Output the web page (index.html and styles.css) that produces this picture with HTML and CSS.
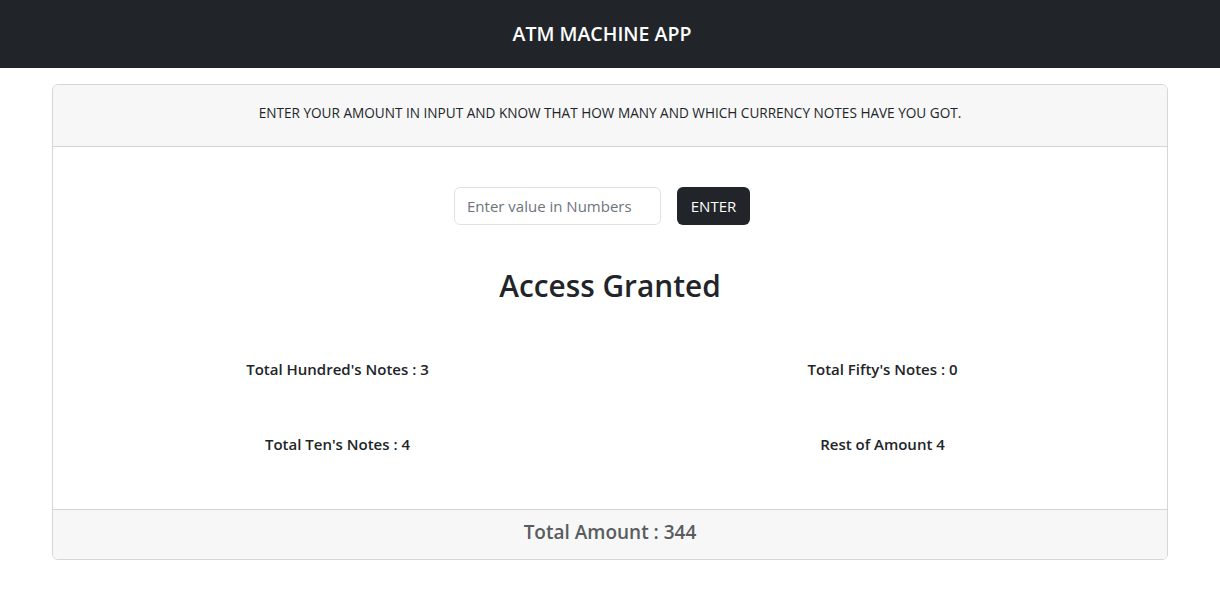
FILE: index.html
```html
<!DOCTYPE html>
<html lang="en">
<head>
<meta charset="utf-8">
<title>ATM Machine App</title>
<link rel="stylesheet" href="styles.css">
</head>
<body>
<nav class="navbar">
  <span class="brand">ATM MACHINE APP</span>
</nav>
<main class="container">
  <section class="card">
    <header class="card-header">
      <p>ENTER YOUR AMOUNT IN INPUT AND KNOW THAT HOW MANY AND WHICH CURRENCY NOTES HAVE YOU GOT.</p>
    </header>
    <div class="card-body">
      <form class="entry">
        <input class="field" type="text" placeholder="Enter value in Numbers">
        <button class="btn" type="button">ENTER</button>
      </form>
      <h2 class="status">Access Granted</h2>
      <div class="results">
        <div class="result">Total Hundred's Notes : 3</div>
        <div class="result">Total Fifty's Notes : 0</div>
        <div class="result">Total Ten's Notes : 4</div>
        <div class="result">Rest of Amount 4</div>
      </div>
    </div>
    <footer class="card-footer">Total Amount : 344</footer>
  </section>
</main>
</body>
</html>
```

FILE: styles.css
```css
* { box-sizing: border-box; }
html, body { margin: 0; padding: 0; }
body {
  font-family: "Open Sans", "Noto Sans", sans-serif;
  color: #212529;
  background: #fff;
}
.navbar {
  height: 68px;
  background: #212529;
  display: flex;
  align-items: center;
  justify-content: center;
  padding-right: 16px;
}
.brand {
  color: #fff;
  font-size: 19.5px;
  font-weight: 600;
  margin-top: -2px;
}
.container {
  width: 1140px;
  margin: 16px auto 0;
  padding: 0 12px;
}
.card {
  border: 1px solid #d6d6d6;
  border-radius: 6px;
  overflow: hidden;
}
.card-header {
  background: #f7f7f7;
  border-bottom: 1px solid #d6d6d6;
  height: 62px;
  display: flex;
  align-items: center;
  justify-content: center;
}
.card-header p {
  margin: -7px 0 0;
  font-size: 13.6px;
}
.card-body {
  padding: 40px 16px 0;
  height: 362px;
}
.entry {
  display: flex;
  justify-content: center;
  gap: 16px;
  margin: 0;
  padding-right: 16px;
}
.field {
  width: 207px;
  height: 38px;
  border: 1px solid #dee2e6;
  border-radius: 6px;
  padding: 6px 12px;
  font: inherit;
  font-size: 15px;
  color: #212529;
}
.field::placeholder { color: #6c757d; }
.btn {
  height: 38px;
  width: 73px;
  background: #212529;
  color: #fff;
  border: 0;
  border-radius: 6px;
  font: inherit;
  font-size: 15px;
}
.status {
  margin: 41px 0 0;
  text-align: center;
  font-size: 29.8px;
  font-weight: 600;
  line-height: 40px;
}
.results {
  display: grid;
  grid-template-columns: 1fr 1fr;
  column-gap: 8px;
  row-gap: 51px;
  margin-top: 51px;
}
.result {
  text-align: center;
  font-size: 15px;
  font-weight: 600;
  line-height: 24px;
}
.card-footer {
  background: #f7f7f7;
  border-top: 1px solid #d6d6d6;
  height: 50px;
  display: flex;
  align-items: center;
  justify-content: center;
  padding-bottom: 6px;
  font-size: 19px;
  font-weight: 600;
  color: #595c5f;
}
```
